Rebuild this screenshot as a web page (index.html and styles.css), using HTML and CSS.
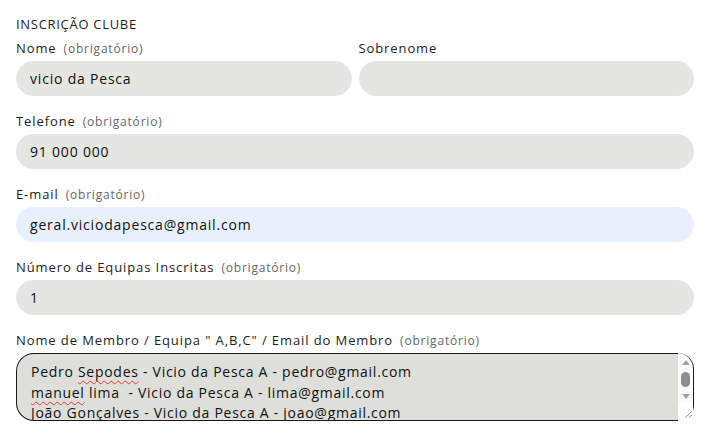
FILE: index.html
```html
<!DOCTYPE html>
<html lang="pt">
<head>
<meta charset="utf-8">
<title>Inscrição Clube</title>
<link rel="stylesheet" href="styles.css">
</head>
<body>
<form class="form">
  <div class="title">INSCRIÇÃO CLUBE</div>
  <div class="row">
    <div class="field">
      <label class="label">Nome<span class="req">(obrigatório)</span></label>
      <input class="input" type="text" value="vicio da Pesca">
    </div>
    <div class="field">
      <label class="label">Sobrenome</label>
      <input class="input" type="text" value="">
    </div>
  </div>
  <div class="field">
    <label class="label">Telefone<span class="req">(obrigatório)</span></label>
    <input class="input" type="text" value="91 000 000">
  </div>
  <div class="field">
    <label class="label">E-mail<span class="req">(obrigatório)</span></label>
    <input class="input autofill" type="text" value="geral.viciodapesca@gmail.com">
  </div>
  <div class="field">
    <label class="label">Número de Equipas Inscritas<span class="req">(obrigatório)</span></label>
    <input class="input" type="text" value="1">
  </div>
  <div class="field">
    <label class="label">Nome de Membro / Equipa " A,B,C" / Email do Membro<span class="req">(obrigatório)</span></label>
    <div class="ta">
      <div class="ta-text" role="textbox" aria-multiline="true" contenteditable="true" spellcheck="false"><div>Pedro <span class="typo">Sepodes</span> - Vicio da Pesca A - pedro@gmail.com</div><div><span class="typo">manuel</span> lima&nbsp; - Vicio da Pesca A - lima@gmail.com</div><div>João Gonçalves - Vicio da Pesca A - joao@gmail.com</div></div>
      <div class="ta-side" aria-hidden="true">
        <div class="sb-up"><span class="tri-up"></span></div>
        <div class="sb-track"><span class="sb-thumb"></span></div>
        <div class="sb-down"><span class="tri-down"></span></div>
        <div class="resizer">
          <svg width="8" height="8" viewBox="0 0 8 8"><path d="M1 8 L8 1 M5 8 L8 5" stroke="#9a9a9a" stroke-width="1" fill="none"/></svg>
        </div>
      </div>
    </div>
  </div>
</form>
</body>
</html>
```

FILE: styles.css
```css
* { box-sizing: border-box; }
html, body { margin: 0; background: #fff; }
body {
  padding: 14px 11px 0 16px;
  font-family: "Open Sans", "Noto Sans", sans-serif;
  color: #1d1d1d;
}
.form { display: flex; flex-direction: column; }
.title {
  font-size: 13px;
  line-height: 20px;
  height: 20px;
  letter-spacing: 0.7px;
  margin-bottom: 4px;
}
.row {
  display: grid;
  grid-template-columns: 1fr 1fr;
  gap: 7px;
}
.field { display: flex; flex-direction: column; margin-bottom: 15px; }
.label {
  font-size: 13px;
  line-height: 20px;
  height: 20px;
  margin-bottom: 3px;
  color: #1d1d1d;
  letter-spacing: 0.9px;
  white-space: nowrap;
}
.req {
  font-size: 12px;
  line-height: 1;
  color: #666;
  margin-left: 7px;
  letter-spacing: 0.8px;
}
.input {
  height: 35px;
  border: 0;
  border-radius: 18px;
  background: #e5e5e1;
  padding: 0 14px;
  font-family: inherit;
  font-size: 14px;
  letter-spacing: 0.8px;
  color: #111;
  outline: none;
}
.input.autofill { background: #e8f0fe; }

.ta {
  display: flex;
  height: 68px;
}
.ta-text {
  flex: 1;
  min-width: 0;
  border: 1px solid #1a1a1a;
  border-right: 0;
  border-radius: 18px 0 0 18px;
  background: #dededa;
  padding: 8px 14px;
  font-size: 14px;
  line-height: 20.5px;
  letter-spacing: 0.72px;
  color: #111;
  overflow: hidden;
  white-space: nowrap;
  outline: none;
}
.typo {
  text-decoration: underline wavy #e23a3a;
  text-decoration-thickness: 1px;
  text-underline-offset: 3px;
  text-decoration-skip-ink: none;
}
.ta-side {
  width: 16px;
  display: flex;
  flex-direction: column;
  background: #fbfbfb;
  border-right: 1px solid #1a1a1a;
  border-radius: 0 18px 18px 0;
}
.sb-up { height: 16px; padding-top: 7px; display: flex; justify-content: center; }
.sb-track { height: 21px; padding-top: 3px; display: flex; justify-content: center; }
.sb-down { height: 13px; padding-top: 4px; display: flex; justify-content: center; }
.tri-up {
  width: 0; height: 0;
  border-left: 4px solid transparent;
  border-right: 4px solid transparent;
  border-bottom: 5px solid #a3a3a3;
}
.tri-down {
  width: 0; height: 0;
  border-left: 4px solid transparent;
  border-right: 4px solid transparent;
  border-top: 5px solid #a3a3a3;
}
.sb-thumb {
  width: 9px;
  height: 15px;
  border-radius: 5px;
  background: #8e8e8e;
}
.resizer {
  flex: 1;
  background: #fff;
  display: flex;
  align-items: flex-end;
  justify-content: flex-end;
  padding: 0 1px 3px 0;
}
.resizer svg { display: block; }
```
